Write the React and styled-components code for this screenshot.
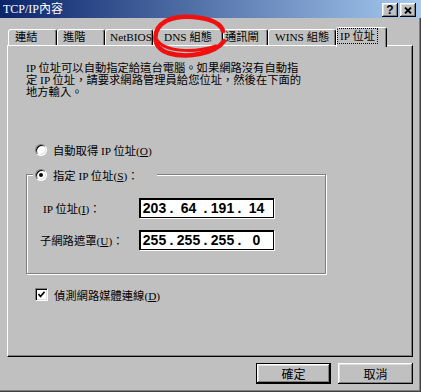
import React from "react";
import styled, { createGlobalStyle, css } from "styled-components";

const GlobalStyle = createGlobalStyle`
  html, body {
    margin: 0;
    padding: 0;
    background: #c0c0c0;
  }
  body {
    font-family: "Liberation Serif", "Noto Sans CJK TC", serif;
    font-size: 11.3px;
    color: #000;
  }
`;

const raised = css`
  background: #c0c0c0;
  box-shadow: inset -1px -1px 0 #000, inset 1px 1px 0 #fff,
    inset -2px -2px 0 #808080, inset 2px 2px 0 #dfdfdf;
`;

const Window = styled.div`
  position: relative;
  width: 421px;
  height: 392px;
  box-sizing: border-box;
  background: #c0c0c0;
  box-shadow: inset -1px -1px 0 #404040, inset -2px -2px 0 #808080;
  display: flex;
  flex-direction: column;
  overflow: hidden;
`;

const TitleBar = styled.div`
  height: 18px;
  display: flex;
  align-items: center;
  justify-content: space-between;
  padding: 0 5px 0 3px;
  background: linear-gradient(to right, #0a246a, #a6caf0);
`;

const Title = styled.span`
  color: #fff;
  font-size: 12px;
  line-height: 18px;
`;

const CapButtons = styled.div`
  display: flex;
  gap: 2px;
  margin-top: 2px;
`;

const CapButton = styled.div`
  ${raised};
  width: 16px;
  height: 14px;
  display: flex;
  align-items: center;
  justify-content: center;
  font-family: "Liberation Sans", sans-serif;
  font-weight: bold;
  font-size: 12px;
  line-height: 14px;
`;

const Body = styled.div`
  flex: 1;
  display: flex;
  flex-direction: column;
  padding: 9px 8px 0 7px;
`;

const TabStrip = styled.div`
  position: relative;
  z-index: 1;
  height: 18px;
  display: flex;
  align-items: flex-end;
  padding-left: 1px;
`;

const Tab = styled.div`
  box-sizing: border-box;
  width: ${p => p.w}px;
  height: ${p => (p.active ? 20 : 16)}px;
  margin-bottom: ${p => (p.active ? -2 : 0)}px;
  padding: ${p => (p.active ? "1px 0 0 1px" : `0 0 0 ${p.pad}px`)};
  background: #c0c0c0;
  border-top: 1px solid #fff;
  border-left: 1px solid #fff;
  border-right: 1px solid #000;
  border-radius: 3px 3px 0 0;
  box-shadow: inset -1px 0 0 #808080;
  line-height: 15px;
  white-space: nowrap;
  overflow: hidden;
`;

const FocusLabel = styled.span`
  display: inline-block;
  padding: 0 2px;
  line-height: 14px;
  outline: 1px dotted #000;
  outline-offset: 0;
`;

const Panel = styled.div`
  box-sizing: border-box;
  height: 312px;
  border-top: 1px solid #fff;
  border-left: 1px solid #fff;
  border-right: 1px solid #000;
  border-bottom: 1px solid #000;
  box-shadow: inset -1px -1px 0 #808080;
  padding: 16px 0 0 18px;
  display: flex;
  flex-direction: column;
`;

const Intro = styled.p`
  margin: 0;
  line-height: 12px;
  white-space: nowrap;
`;

const OptionRow = styled.div`
  display: flex;
  align-items: center;
  gap: 6px;
  height: 13px;
  margin: ${p => p.m || "0"};
  width: fit-content;
`;

const Radio = styled.span`
  box-sizing: border-box;
  width: 12px;
  height: 12px;
  border-radius: 50%;
  background: #fff;
  border: 1px solid;
  border-color: #808080 #fff #fff #808080;
  box-shadow: inset 1px 1px 0 #000, inset -1px -1px 0 #dfdfdf;
  display: flex;
  align-items: center;
  justify-content: center;

  &::after {
    content: "";
    width: 4px;
    height: 4px;
    border-radius: 50%;
    background: ${p => (p.checked ? "#000" : "transparent")};
  }
`;

const Check = styled.span`
  box-sizing: border-box;
  width: 13px;
  height: 13px;
  background: #fff;
  border: 1px solid;
  border-color: #808080 #fff #fff #808080;
  box-shadow: inset 1px 1px 0 #000, inset -1px -1px 0 #dfdfdf;
  display: flex;
  align-items: center;
  justify-content: center;
`;

const Key = styled.span`
  text-decoration: underline;
`;

const GroupBox = styled.div`
  box-sizing: border-box;
  width: 300px;
  height: 100px;
  margin-top: 18px;
  border: 1px solid #808080;
  box-shadow: inset 1px 1px 0 #fff, 1px 1px 0 #fff;
  display: flex;
  flex-direction: column;
`;

const Legend = styled(OptionRow)`
  margin: -7px 0 0 6px;
  padding: 0 18px 0 2px;
  background: #c0c0c0;
`;

const Fields = styled.div`
  display: grid;
  grid-template-columns: 99px 135px;
  row-gap: 12px;
  align-items: center;
  margin: 17px 0 0 13px;
`;

const FieldLabel = styled.span`
  padding-left: ${p => p.indent || 0}px;
  white-space: nowrap;
`;

const IpBox = styled.div`
  box-sizing: border-box;
  height: 20px;
  background: #fff;
  border: 1px solid #000;
  box-shadow: inset 1px 1px 0 #000, 1px 1px 0 #fff;
  display: flex;
  align-items: center;
  padding-left: 1px;
  font-family: "Liberation Sans", sans-serif;
  font-weight: bold;
  font-size: 14px;
`;

const Octet = styled.span`
  width: 27px;
  text-align: center;
`;

const Dot = styled.span`
  width: 7px;
  text-align: center;
`;

const ButtonRow = styled.div`
  display: flex;
  justify-content: flex-end;
  gap: 7px;
  margin-top: 6px;
`;

const Button = styled.div`
  ${raised};
  box-sizing: border-box;
  width: 75px;
  height: 21px;
  display: flex;
  align-items: center;
  justify-content: center;
  font-size: 12px;
  ${p =>
    p.primary &&
    css`
      border: 1px solid #000;
    `}
`;

// red hand-drawn circle over the window, in page coordinates
const Annotation = styled.svg`
  position: absolute;
  left: 0;
  top: 0;
  width: 421px;
  height: 392px;
  pointer-events: none;
  z-index: 5;
`;

const tabs = [
  { label: "連結", w: 49, pad: 6 },
  { label: "進階", w: 48, pad: 5 },
  { label: "NetBIOS", w: 48, pad: 4 },
  { label: "DNS 組態", w: 70, pad: 10 },
  { label: "通訊閘", w: 45, pad: 1 },
  { label: "WINS 組態", w: 68, pad: 6 },
  { label: "IP 位址", w: 51, active: true }
];

function IpAddress({ parts }) {
  return (
    <IpBox>
      {parts.map((p, i) => (
        <React.Fragment key={i}>
          {i > 0 && <Dot>.</Dot>}
          <Octet>{p}</Octet>
        </React.Fragment>
      ))}
    </IpBox>
  );
}

export default function App() {
  return (
    <Window>
      <GlobalStyle />
      <TitleBar>
        <Title>TCP/IP內容</Title>
        <CapButtons>
          <CapButton>?</CapButton>
          <CapButton>
            <svg width="8" height="7" viewBox="0 0 8 7">
              <path d="M1 0.5 L7 6.5 M7 0.5 L1 6.5" stroke="#000" strokeWidth="1.8" />
            </svg>
          </CapButton>
        </CapButtons>
      </TitleBar>

      <Body>
        <TabStrip>
          {tabs.map(t => (
            <Tab key={t.label} w={t.w} pad={t.pad} active={t.active}>
              {t.active ? <FocusLabel>{t.label}</FocusLabel> : t.label}
            </Tab>
          ))}
        </TabStrip>

        <Panel>
          <Intro>
            IP 位址可以自動指定給這台電腦。如果網路沒有自動指
            <br />
            定 IP 位址，請要求網路管理員給您位址，然後在下面的
            <br />
            地方輸入。
          </Intro>

          <OptionRow m="45px 0 0 9px">
            <Radio />
            <span>
              自動取得 IP 位址(<Key>O</Key>)
            </span>
          </OptionRow>

          <GroupBox>
            <Legend>
              <Radio checked />
              <span>
                指定 IP 位址(<Key>S</Key>)：
              </span>
            </Legend>
            <Fields>
              <FieldLabel indent={3}>
                IP 位址(<Key>I</Key>)：
              </FieldLabel>
              <IpAddress parts={["203", "64", "191", "14"]} />
              <FieldLabel>
                子網路遮罩(<Key>U</Key>)：
              </FieldLabel>
              <IpAddress parts={["255", "255", "255", "0"]} />
            </Fields>
          </GroupBox>

          <OptionRow m="14px 0 0 9px">
            <Check>
              <svg width="7" height="7" viewBox="0 0 7 7">
                <path d="M0.5 3 L2.5 5.5 L6.5 0.8" stroke="#000" strokeWidth="1.6" fill="none" />
              </svg>
            </Check>
            <span>
              偵測網路媒體連線(<Key>D</Key>)
            </span>
          </OptionRow>
        </Panel>

        <ButtonRow>
          <Button primary>確定</Button>
          <Button>取消</Button>
        </ButtonRow>
      </Body>

      <Annotation viewBox="0 0 421 392">
        <path
          d="M223 31 C219 17, 183 13, 166 21 C152 29, 151 47, 168 53 C188 59, 216 53, 224 41"
          stroke="#f01010"
          strokeWidth="4.5"
          fill="none"
          strokeLinecap="round"
        />
        <path
          d="M157 40 C164 51, 192 54, 216 46"
          stroke="#f01010"
          strokeWidth="3"
          fill="none"
          strokeLinecap="round"
        />
      </Annotation>
    </Window>
  );
}
